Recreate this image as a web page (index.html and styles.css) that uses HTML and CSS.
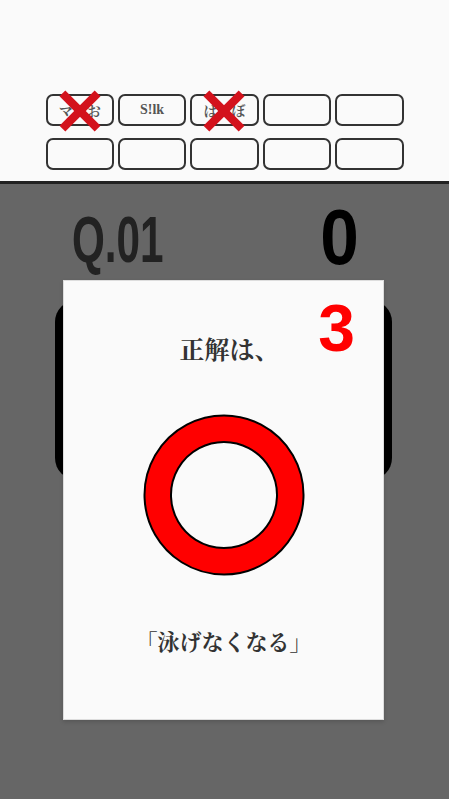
FILE: index.html
```html
<!DOCTYPE html>
<html lang="ja">

<head>
  <meta charset="UTF-8">
  <meta name="viewport" content="width=device-width, initial-scale=1.0">
  <title>クイズ</title>
  <link rel="stylesheet" href="styles.css">
</head>

<body>
  <div class="header">
    <div class="slots">
      <div class="slot">マ？お
        <svg class="miss" viewBox="0 0 40 40"><line x1="4" y1="4" x2="36" y2="36" /><line x1="36" y1="4" x2="4" y2="36" /></svg>
      </div>
      <div class="slot">S!lk</div>
      <div class="slot">は？ぼ
        <svg class="miss" viewBox="0 0 40 40"><line x1="4" y1="4" x2="36" y2="36" /><line x1="36" y1="4" x2="4" y2="36" /></svg>
      </div>
      <div class="slot"></div>
      <div class="slot"></div>
      <div class="slot"></div>
      <div class="slot"></div>
      <div class="slot"></div>
      <div class="slot"></div>
      <div class="slot"></div>
    </div>
  </div>

  <div class="game">
    <div class="status">
      <div class="question-no">Q.01</div>
      <div class="score">0</div>
    </div>
    <div class="question-card"></div>
  </div>

  <!-- 結果のモーダル -->
  <div class="modal">
    <div class="countdown">3</div>
    <div class="modal-title">正解は、</div>
    <svg class="answer-mark" width="164" height="164" viewBox="0 0 164 164">
      <path d="M82 2.5a79.5 79.5 0 1 0 0.01 0z M82 29a53 53 0 1 1 -0.01 0z" fill="#ff0000" fill-rule="evenodd" stroke="#000" stroke-width="2" />
    </svg>
    <div class="answer-text">「泳げなくなる」</div>
  </div>
</body>

</html>
```

FILE: styles.css
```css
body {
  margin: 0;
  padding: 0;
  background-color: #666666;
  font-family: "Liberation Serif", "Noto Serif CJK JP", "Noto Sans CJK JP", serif;
  height: 799px;
  overflow: hidden;
}

.header {
  background-color: #fafafa;
  height: 181px;
  border-bottom: 3px solid #222222;
  box-sizing: content-box;
}

.slots {
  width: 358px;
  margin: 0 auto;
  padding-top: 94px;
  display: grid;
  grid-template-columns: repeat(5, 1fr);
  column-gap: 4px;
  row-gap: 12px;
}

.slot {
  position: relative;
  height: 32px;
  box-sizing: border-box;
  border: 2px solid #333333;
  border-radius: 7px;
  background-color: #fafafa;
  display: flex;
  align-items: center;
  justify-content: center;
  font-size: 14px;
  font-weight: bold;
  color: #555555;
}

.miss {
  position: absolute;
  left: 50%;
  top: 50%;
  width: 44px;
  height: 44px;
  margin-left: -22px;
  margin-top: -21px;
}

.miss line {
  stroke: #d3121c;
  stroke-width: 7.5;
}

.game {
  padding-top: 20px;
}

.status {
  display: flex;
  justify-content: space-between;
  align-items: flex-end;
  margin: 0 90px 0 72px;
  height: 72px;
}

.question-no {
  font-family: "Liberation Sans Narrow", "Liberation Sans", sans-serif;
  font-weight: bold;
  font-size: 64px;
  line-height: 64px;
  color: #222222;
  transform: scaleX(0.66);
  transform-origin: left center;
  margin-bottom: 4px;
}

.score {
  font-family: "Liberation Sans Narrow", "Liberation Sans", sans-serif;
  font-weight: bold;
  font-size: 77px;
  line-height: 77px;
  color: #000000;
  transform: scaleX(0.9);
  transform-origin: right center;
}

.question-card {
  margin: 24px 57px 0 55px;
  height: 180px;
  background-color: #000000;
  border-radius: 22px;
}

.modal {
  position: absolute;
  left: 63px;
  top: 280px;
  width: 321px;
  height: 440px;
  box-sizing: border-box;
  background-color: #fafafa;
  border: 1px solid #dddddd;
  box-shadow: 0 2px 4px rgba(0, 0, 0, 0.15);
  display: flex;
  flex-direction: column;
  align-items: center;
}

.countdown {
  position: absolute;
  right: 28px;
  top: 14px;
  font-family: "Liberation Sans Narrow", "Liberation Sans", sans-serif;
  font-weight: bold;
  font-size: 66px;
  line-height: 66px;
  color: #ff0000;
}

.modal-title {
  margin-top: 52px;
  font-size: 25px;
  line-height: 36px;
  font-weight: bold;
  color: #333333;
  padding-left: 12px;
}

.answer-mark {
  margin-top: 44px;
}

.answer-text {
  margin-top: 51px;
  font-size: 22px;
  line-height: 30px;
  font-weight: bold;
  color: #333333;
}
```
